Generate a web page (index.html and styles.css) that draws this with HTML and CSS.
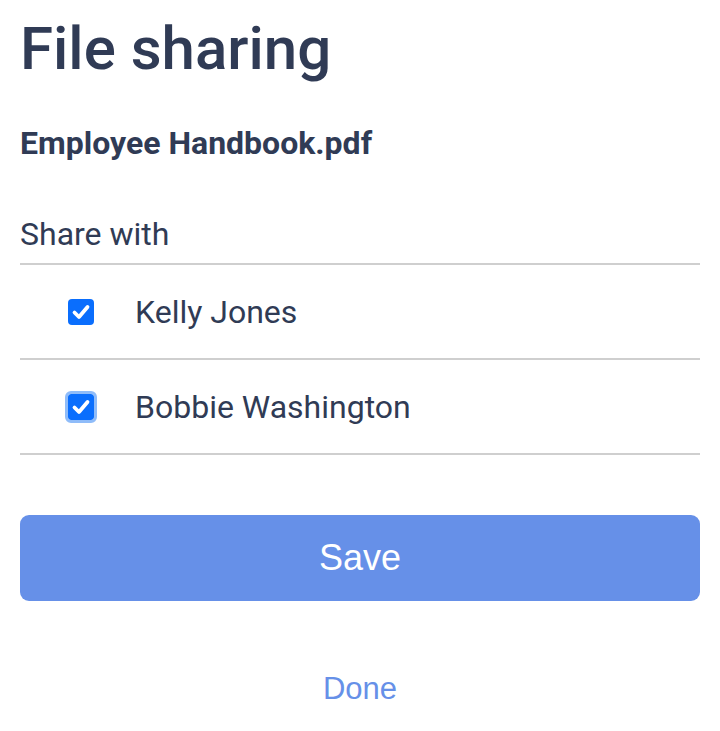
FILE: index.html
```html
<!DOCTYPE html>
<html lang="en">
<head>
<meta charset="utf-8">
<title>File sharing</title>
<link rel="stylesheet" href="styles.css">
</head>
<body>
<main class="sheet">
  <h1 class="title">File sharing</h1>
  <h2 class="filename">Employee Handbook.pdf</h2>
  <div class="share-label">Share with</div>
  <ul class="people">
    <li class="person">
      <span class="check"><svg viewBox="0 0 26 26" width="26" height="26"><path d="M6.5 13.5 L11 18 L19.5 8" fill="none" stroke="#fff" stroke-width="3.8" stroke-linecap="round" stroke-linejoin="round"/></svg></span>
      <span class="name">Kelly Jones</span>
    </li>
    <li class="person">
      <span class="check focused"><svg viewBox="0 0 26 26" width="26" height="26"><path d="M6.5 13.5 L11 18 L19.5 8" fill="none" stroke="#fff" stroke-width="3.8" stroke-linecap="round" stroke-linejoin="round"/></svg></span>
      <span class="name">Bobbie Washington</span>
    </li>
  </ul>
  <button class="save" type="button">Save</button>
  <button class="done" type="button">Done</button>
</main>
</body>
</html>
```
FILE: styles.css
```css
html, body {
  margin: 0;
  padding: 0;
  background: #ffffff;
}
body {
  font-family: Roboto, "Noto Sans", sans-serif;
  color: #303b55;
}
.sheet {
  padding: 0 20px;
  display: flex;
  flex-direction: column;
}
.title {
  margin: 0;
  padding-top: 14px;
  font-size: 60px;
  line-height: 70px;
  font-weight: 500;
}
.filename {
  margin: 40px 0 0;
  font-size: 32px;
  line-height: 38px;
  font-weight: 700;
}
.share-label {
  margin-top: 53px;
  font-size: 32px;
  line-height: 38px;
  padding-bottom: 10px;
  border-bottom: 2px solid #cfcfcf;
}
.people {
  list-style: none;
  margin: 0;
  padding: 0;
}
.person {
  display: flex;
  align-items: center;
  height: 93px;
  border-bottom: 2px solid #cfcfcf;
  padding-left: 48px;
  gap: 41px;
}
.check {
  width: 26px;
  height: 26px;
  border-radius: 4px;
  background: #0a6efd;
  display: flex;
  align-items: center;
  justify-content: center;
}
.check.focused {
  outline: 3px solid #8fbcf9;
  outline-offset: 0;
  border-radius: 3px;
}
.name {
  font-size: 32px;
  line-height: 38px;
}
.save {
  margin-top: 60px;
  height: 86px;
  border: 0;
  border-radius: 9px;
  background: #6690e8;
  color: #ffffff;
  font-family: "Liberation Sans", Arial, sans-serif;
  font-size: 36px;
}
.done {
  margin-top: 68px;
  align-self: center;
  border: 0;
  background: none;
  color: #6690e8;
  font-family: "Liberation Sans", Arial, sans-serif;
  font-size: 31px;
  padding: 0;
  line-height: 40px;
}
```
